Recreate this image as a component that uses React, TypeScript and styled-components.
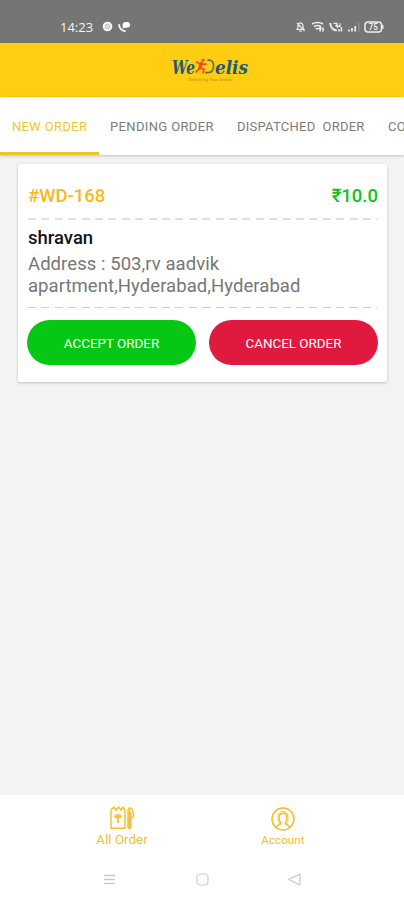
import React from "react";
import styled, { createGlobalStyle } from "styled-components";

const GlobalStyle = createGlobalStyle`
  * { box-sizing: border-box; }
  html, body, #root { height: 100%; }
  body { margin: 0; overflow: hidden; background: #f3f3f3; font-family: Roboto, sans-serif; }
  svg { display: block; flex: none; }
`;

const Screen = styled.div`
  display: flex;
  flex-direction: column;
  width: 404px;
  height: 900px;
  overflow: hidden;
  background: #f3f3f3;
`;

const StatusBar = styled.header`
  display: flex;
  flex: none;
  align-items: center;
  height: 43px;
  padding: 10px 20px 0 60px;
  background: #757575;
  color: #f4f4f4;
`;

const Clock = styled.span`
  width: 42px;
  font: 500 13px/16px "Open Sans", sans-serif;
`;

const StatusGroup = styled.div<{ $end?: boolean }>`
  display: flex;
  align-items: center;
  gap: ${(p) => (p.$end ? 4.5 : 5)}px;
  margin-left: ${(p) => (p.$end ? "auto" : "0")};
`;

const BrandBar = styled.div`
  display: flex;
  flex: none;
  justify-content: center;
  height: 54px;
  padding: 10px 0 0 16px;
  background: #ffcd12;
`;

const Tabs = styled.nav`
  display: flex;
  flex: none;
  height: 58px;
  background: #fff;
  box-shadow: 0 1px 3px rgba(0, 0, 0, 0.2);
`;

const Tab = styled.div<{ $active?: boolean; $width: number; $spacing: number }>`
  flex: none;
  width: ${(p) => p.$width}px;
  height: 58px;
  padding-left: ${(p) => (p.$active ? 12 : 11)}px;
  border-bottom: ${(p) => (p.$active ? "3px solid #edc62f" : "3px solid transparent")};
  color: ${(p) => (p.$active ? "#f6c52c" : "#7c7c7c")};
  font-size: 13px;
  line-height: 60px;
  letter-spacing: ${(p) => p.$spacing}px;
  white-space: pre;
`;

const Content = styled.main`
  flex: 1;
  padding: 9px 17px 0 18px;
`;

const Card = styled.article`
  display: flex;
  flex-direction: column;
  height: 218px;
  padding: 20px 9px 0;
  border-radius: 2px;
  background: #fff;
  box-shadow: 0 1px 3px rgba(0, 0, 0, 0.22);
`;

const OrderHeader = styled.div`
  display: flex;
  justify-content: space-between;
  height: 34px;
  padding: 0 0 0 1px;
  font-size: 18.5px;
  line-height: 24px;
  font-weight: 500;
`;

const OrderId = styled.span`
  color: #f6b91b;
`;

const Price = styled.span`
  color: #14c11a;
`;

const Divider = styled.div<{ $tone: string; $thickness: number }>`
  flex: none;
  height: ${(p) => p.$thickness}px;
  margin: 0 1px;
  background: repeating-linear-gradient(90deg, ${(p) => p.$tone} 0 8px, transparent 8px 13.4px);
`;

const Customer = styled.div`
  height: 33px;
  padding: 7px 1px 0;
  color: #151515;
  font-size: 18.5px;
  line-height: 23px;
  font-weight: 500;
`;

const Address = styled.p`
  height: 54px;
  margin: 0;
  padding: 0 1px;
  color: #767676;
  font-size: 18.5px;
  line-height: 22px;
  letter-spacing: 0.06px;
  white-space: nowrap;
`;

const Actions = styled.div`
  display: flex;
  gap: 13px;
  padding-top: 12px;
`;

const ActionButton = styled.button<{ $tone: string }>`
  flex: 1;
  height: 45px;
  padding: 2px 0 0;
  border: 0;
  border-radius: 23px;
  background: ${(p) => p.$tone};
  color: #fff;
  font: 400 13.4px/20px Roboto, sans-serif;
`;

const BottomNav = styled.nav`
  display: flex;
  flex: none;
  justify-content: space-between;
  height: 64px;
  padding: 10px 80px 0 81px;
  background: #fff;
`;

const NavItem = styled.div<{ $size: number }>`
  display: flex;
  flex-direction: column;
  align-items: center;
  width: 82px;
  color: #f5bf27;
  font-size: ${(p) => p.$size}px;
  line-height: 18px;
  letter-spacing: 0.1px;
`;

const SystemNav = styled.footer`
  display: flex;
  flex: none;
  justify-content: space-between;
  height: 41px;
  padding: 13px 102px 0 102px;
  background: #fff;
`;

const ChatIcon = () => (
  <svg width="11" height="11" viewBox="0 0 11 11" fill="none">
    <circle cx="5.5" cy="5.5" r="4.8" fill="#f5f5f5" />
    <circle cx="5.5" cy="5.5" r="2.2" stroke="#b0b0b0" strokeWidth="1" />
    <circle cx="5.5" cy="5.5" r=".8" fill="#b0b0b0" />
  </svg>
);

const CallIcon = () => (
  <svg width="13" height="12" viewBox="0 0 13 12">
    <path d="M1 3.2c0 3.7 3 7 6.8 7.1" fill="none" stroke="#f1f1f1" strokeWidth="2" />
    <ellipse cx="8.3" cy="3.8" rx="3.8" ry="2.9" fill="#fff" />
    <path d="M5.2 4.5 4.4 7.8 8 6Z" fill="#fff" />
  </svg>
);

const MutedBellIcon = () => (
  <svg width="11" height="12" viewBox="0 0 11 12" fill="none" stroke="#eee" strokeWidth="1.2">
    <path d="M2 8.5h7L8 7V4.7C8 1 3 1 3 4.7V7ZM4.3 10.2h2.4M2 2l7.5 8" />
  </svg>
);

const WifiIcon = () => (
  <svg width="14" height="12" viewBox="0 0 14 12" fill="none" stroke="#eee" strokeWidth="1.6">
    <path d="M1 3c3.2-2 8-2 11 0M3 5.6c2-1.2 5-1.2 7 0M4.8 8c1-.7 2-.7 3 0M9.2 10.5v-4m-1.4 1.3 1.4-1.4 1.2 1.4M12 6.4v4" />
  </svg>
);

const VoiceIcon = () => (
  <svg width="14" height="12" viewBox="0 0 14 12" fill="none" stroke="#eee">
    <path d="M1.3 2c0 4 2.7 7 6.5 7.6" strokeWidth="2" />
    <path d="M4.5 2.3H8v3h3v-3M8.5 7V4m-2 1 2-2" strokeWidth="1.2" />
    <path d="M10 10.5V8m2.4 2.5V6" strokeWidth="1.5" />
  </svg>
);

const SignalIcon = () => (
  <svg width="12" height="12" viewBox="0 0 12 12" fill="none" strokeWidth="1.7">
    <path d="M1 10.5v-2M4 10.5V7M7.2 10.5V5" stroke="#eee" />
    <path d="M10.8 10.5V2" stroke="#969696" strokeWidth="1.2" />
  </svg>
);

const BatteryIcon = () => (
  <svg width="20" height="12" viewBox="0 0 20 12" fill="none">
    <rect x="1" y="1" width="16.5" height="10" rx="3" stroke="#eee" strokeWidth="1.5" />
    <path d="M18.7 4v4" stroke="#eee" strokeWidth="1.5" />
    <text x="4.4" y="9" fill="#f4f4f4" fontSize="8.4" fontWeight="500" fontFamily="Roboto">75</text>
  </svg>
);

const Logo = () => (
  <svg width="80" height="34" viewBox="0 0 80 34">
    <g fill="#245b75" fontFamily="DejaVu Serif, serif" fontSize="19" fontStyle="italic" fontWeight="700">
      <text x="2" y="20.5" textLength="23" lengthAdjust="spacingAndGlyphs">We</text>
      <text x="45" y="20.5" textLength="33" lengthAdjust="spacingAndGlyphs">elis</text>
    </g>
    <path d="M37.5 7.2h2c6 .2 5.2 12-1 12.5H35" fill="none" stroke="#66713d" strokeWidth="1.7" />
    <g stroke="#ec4b1c" strokeLinecap="round" fill="none">
      <circle cx="33" cy="7.2" r="1.1" fill="#ec4b1c" />
      <path d="m31.5 10.5-1.8 4.5" strokeWidth="3.2" />
      <path d="m26.5 9 3 2 6.5 .2M29.5 15.5l-3.5 3.5M30.5 15l3.5 1.3-1 3.5" strokeWidth="1.7" />
    </g>
    <text x="19" y="28" fill="#e98a16" fontFamily="Roboto, sans-serif" fontSize="3.6" fontWeight="700" textLength="43">Delivering Your Desire</text>
  </svg>
);

const OrderIcon = () => (
  <svg width="26" height="26" viewBox="0 0 26 26" fill="none" stroke="#f4bd29" strokeWidth="1.4">
    <path d="M2 5v18.3h14V5M2 5l3-3 2 3 2.5-3L12 5l2-3 2 3" />
    <path d="M5.5 10.5c1 2.7 6 2.7 7 0M9 11v7M6.5 10h5" strokeWidth="1.7" />
    <path d="M19 7v15l1.5 1.8L22 22V7M18.5 6.5 20 3.2c3-1 4.8 3 4.5 8.3l-2 1.5" />
    <path d="M20.5 5v17" strokeWidth="2" />
  </svg>
);

const AccountIcon = () => (
  <svg width="26" height="26" viewBox="0 0 26 26" fill="none" stroke="#f4bd29" strokeWidth="1.5">
    <circle cx="13" cy="14" r="11" />
    <path d="M6 22.2c1-2.5 4.8-2.2 4.8-4.2-2.5-3.1-2.8-9.8 2.2-9.8s4.7 6.7 2.2 9.8c0 2 3.8 1.7 4.8 4.2" />
    <path d="M8 19c1.4-.5 1.6-1.2.7-2.5C6.8 12.8 8 6.4 13 6.4s6.2 6.4 4.3 10.1c-.9 1.3-.7 2 .7 2.5" strokeWidth=".8" />
  </svg>
);

const MenuIcon = () => (
  <svg width="15" height="15" viewBox="0 0 15 15" fill="none" stroke="#c9c9c9">
    <path d="M2 3.5h11M2 7.5h11M2 11.5h11" strokeWidth="1.4" />
  </svg>
);

const HomeIcon = () => (
  <svg width="15" height="15" viewBox="0 0 15 15" fill="none" stroke="#d0d0d0">
    <rect x="2" y="2" width="11" height="11" rx="3" strokeWidth="1.2" />
  </svg>
);

const BackIcon = () => (
  <svg width="15" height="15" viewBox="0 0 15 15" fill="none" stroke="#c6c6c6">
    <path d="M13 2v11L1.5 7.5Z" strokeWidth="1.2" strokeLinejoin="round" />
  </svg>
);

export default function App() {
  return (
    <>
      <GlobalStyle />
      <Screen>
        <StatusBar>
          <Clock>14:23</Clock>
          <StatusGroup><ChatIcon /><CallIcon /></StatusGroup>
          <StatusGroup $end><MutedBellIcon /><WifiIcon /><VoiceIcon /><SignalIcon /><BatteryIcon /></StatusGroup>
        </StatusBar>
        <BrandBar><Logo /></BrandBar>
        <Tabs>
          <Tab $active $width={99} $spacing={0.35}>NEW ORDER</Tab>
          <Tab $width={127} $spacing={0.36}>PENDING ORDER</Tab>
          <Tab $width={151} $spacing={0.25}>DISPATCHED  ORDER</Tab>
          <Tab $width={150} $spacing={0.3}>COMPLETED ORDER</Tab>
        </Tabs>
        <Content>
          <Card>
            <OrderHeader><OrderId>#WD-168</OrderId><Price>₹10.0</Price></OrderHeader>
            <Divider $tone="#e0e0e0" $thickness={2} />
            <Customer>shravan</Customer>
            <Address>Address : 503,rv aadvik<br />apartment,Hyderabad,Hyderabad</Address>
            <Divider $tone="#cdcdcd" $thickness={1} />
            <Actions>
              <ActionButton $tone="#06c814">ACCEPT ORDER</ActionButton>
              <ActionButton $tone="#e0193f">CANCEL ORDER</ActionButton>
            </Actions>
          </Card>
        </Content>
        <BottomNav>
          <NavItem $size={13.2}><OrderIcon />All Order</NavItem>
          <NavItem $size={11.5}><AccountIcon />Account</NavItem>
        </BottomNav>
        <SystemNav><MenuIcon /><HomeIcon /><BackIcon /></SystemNav>
      </Screen>
    </>
  );
}
